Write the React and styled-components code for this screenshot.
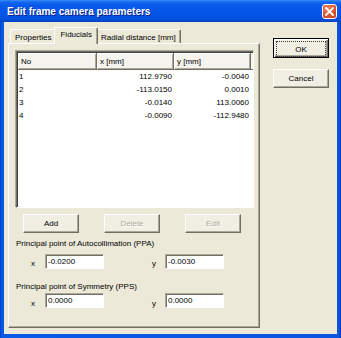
import React from 'react'
import styled, { createGlobalStyle } from 'styled-components'

const GlobalStyle = createGlobalStyle`
  html, body {
    margin: 0;
    padding: 0;
    background: #ffffff;
  }
  body {
    font-family: "Liberation Sans", Arial, sans-serif;
    font-size: 8px;
    color: #000;
  }
  * {
    box-sizing: border-box;
  }
`

const fiducials = [
  { no: '1', x: '112.9790', y: '-0.0040' },
  { no: '2', x: '-113.0150', y: '0.0010' },
  { no: '3', x: '-0.0140', y: '113.0060' },
  { no: '4', x: '-0.0090', y: '-112.9480' },
]

const App = () => {
  return (
    <>
      <GlobalStyle />
      <Window>
        <TitleBar>
          <Title>Edit frame camera parameters</Title>
          <CloseButton>
            <svg width="9" height="9" viewBox="0 0 9 9">
              <path d="M1 1 L8 8 M8 1 L1 8" stroke="#fff" strokeWidth="1.8" strokeLinecap="square" />
            </svg>
          </CloseButton>
        </TitleBar>

        <Client>
          <LeftColumn>
            <TabStrip>
              <Tab>Properties</Tab>
              <Tab active>Fiducials</Tab>
              <Tab>Radial distance [mm]</Tab>
            </TabStrip>

            <Panel>
              <ListView>
                <HeaderRow>
                  <HeaderCell>No</HeaderCell>
                  <HeaderCell>x [mm]</HeaderCell>
                  <HeaderCell>y [mm]</HeaderCell>
                  <HeaderFiller />
                </HeaderRow>
                {fiducials.map((f) => (
                  <Row key={f.no}>
                    <Cell>{f.no}</Cell>
                    <Cell right>{f.x}</Cell>
                    <Cell right>{f.y}</Cell>
                  </Row>
                ))}
              </ListView>

              <ButtonRow>
                <Button>Add</Button>
                <Button disabled>Delete</Button>
                <Button disabled>Edit</Button>
              </ButtonRow>

              <GroupLabel top={6}>Principal point of Autocollimation (PPA)</GroupLabel>
              <FieldRow top={6}>
                <FieldLabel>x</FieldLabel>
                <Field readOnly value="-0.0200" />
                <FieldLabel second>y</FieldLabel>
                <Field readOnly value="-0.0030" />
              </FieldRow>

              <GroupLabel top={13}>Principal point of Symmetry (PPS)</GroupLabel>
              <FieldRow top={2} low>
                <FieldLabel>x</FieldLabel>
                <Field readOnly value="0.0000" />
                <FieldLabel second>y</FieldLabel>
                <Field readOnly value="0.0000" />
              </FieldRow>
            </Panel>
          </LeftColumn>

          <RightColumn>
            <DefaultButton>
              <span>OK</span>
            </DefaultButton>
            <Button>Cancel</Button>
          </RightColumn>
        </Client>
      </Window>
    </>
  )
}

const Window = styled.div`
  width: 341px;
  height: 338px;
  display: flex;
  flex-direction: column;
  background: linear-gradient(to right, #0842c8 0px, #0a5ae8 2px, #0a56e0 339px, #0637b0 341px);
`

const TitleBar = styled.div`
  height: 22px;
  display: flex;
  align-items: center;
  justify-content: space-between;
  padding: 0 4px 0 7px;
  background: linear-gradient(
    to bottom,
    #3c8ef8 0px,
    #1468f0 2px,
    #0a5aeb 5px,
    #0556ec 12px,
    #0552e0 18px,
    #0446ce 21px,
    #0441c4 22px
  );
`

const Title = styled.div`
  color: #ffffff;
  font-weight: bold;
  font-size: 10px;
  text-shadow: 1px 1px #0a1e8a;
`

const CloseButton = styled.div`
  width: 15px;
  height: 15px;
  margin-top: 1px;
  display: flex;
  align-items: center;
  justify-content: center;
  border: 1px solid #ffffff;
  border-radius: 3px;
  background: radial-gradient(circle at 35% 30%, #f08a64 0%, #e05a33 45%, #c23b15 100%);
`

const Client = styled.div`
  flex: 1;
  display: flex;
  margin: 0 4px 4px 4px;
  padding: 5px 0 0 4px;
  background: #ece9d8;
`

const LeftColumn = styled.div`
  width: 252px;
  display: flex;
  flex-direction: column;
  margin-bottom: 6px;
`

const TabStrip = styled.div`
  height: 16px;
  display: flex;
  align-items: flex-end;
  padding-left: 2px;
  position: relative;
  z-index: 1;
`

const Tab = styled.div`
  height: ${({ active }) => (active ? '17px' : '14px')};
  margin: ${({ active }) => (active ? '0 -2px -1px -2px' : '0')};
  padding: ${({ active }) => (active ? '2px 5px 0 5px' : '1px 4px 0 4px')};
  display: flex;
  align-items: ${({ active }) => (active ? 'flex-start' : 'center')};
  white-space: nowrap;
  background: #ece9d8;
  border-top: 1px solid #ffffff;
  border-left: 1px solid #ffffff;
  border-right: 1px solid #716f64;
  border-radius: 2px 2px 0 0;
  box-shadow: inset -1px 0 #aca899;
  position: relative;
  z-index: ${({ active }) => (active ? 2 : 1)};
`

const Panel = styled.div`
  flex: 1;
  display: flex;
  flex-direction: column;
  padding: 6px 0 0 6px;
  border: 1px solid;
  border-color: #ffffff #716f64 #716f64 #ffffff;
  box-shadow: inset -1px -1px #aca899;
`

const ListView = styled.div`
  width: 238px;
  height: 157px;
  background: #ffffff;
  border: 1px solid;
  border-color: #716f64 #ffffff #ffffff #716f64;
  box-shadow: inset 1px 1px #404040, -1px -1px 0 0 #aca899;
  padding: 1px 0 0 1px;
  margin-left: 1px;
  margin-top: 1px;
`

const HeaderRow = styled.div`
  display: grid;
  grid-template-columns: 79px 77px 77px 1fr;
  height: 17px;
`

const HeaderCell = styled.div`
  display: flex;
  align-items: center;
  padding-left: 3px;
  background: #f4f3ee;
  border-right: 1px solid #716f64;
  border-bottom: 1px solid #716f64;
  box-shadow: inset 1px 1px #ffffff, inset -1px -1px #aca899;
`

const HeaderFiller = styled.div`
  background: #f4f3ee;
  border-bottom: 1px solid #716f64;
`

const Row = styled.div`
  display: grid;
  grid-template-columns: 79px 77px 77px;
  height: 13px;
  align-items: center;
  &:first-of-type {
    margin-top: 1px;
  }
`

const Cell = styled.div`
  text-align: ${({ right }) => (right ? 'right' : 'left')};
  padding: ${({ right }) => (right ? '0 2px 0 0' : '0 0 0 1px')};
  white-space: nowrap;
`

const ButtonRow = styled.div`
  display: flex;
  gap: 25px;
  margin-top: 6px;
  padding-left: 8px;
`

const Button = styled.button`
  width: 56px;
  height: 19px;
  padding: 0;
  font-family: "Liberation Sans", Arial, sans-serif;
  font-size: 8px;
  color: #000;
  background: #f1efe4;
  border: 1px solid;
  border-color: #ffffff #716f64 #716f64 #ffffff;
  box-shadow: inset -1px -1px #aca899;
  &:disabled {
    color: #aca899;
    text-shadow: 1px 1px #ffffff;
  }
`

const DefaultButton = styled.button`
  width: 56px;
  height: 20px;
  padding: 1px;
  font-family: "Liberation Sans", Arial, sans-serif;
  font-size: 8px;
  color: #000;
  background: #f1efe4;
  border: 1px solid #000000;
  box-shadow: inset 1px 1px #ffffff, inset -1px -1px #716f64, inset -2px -2px #aca899;

  span {
    display: flex;
    align-items: center;
    justify-content: center;
    height: 100%;
    margin: 1px;
    border: 1px dotted #3c3c3c;
  }
`

const GroupLabel = styled.div`
  margin-top: ${({ top }) => top}px;
  padding-left: 1px;
  line-height: 9px;
  white-space: nowrap;
`

const FieldRow = styled.div`
  display: flex;
  align-items: ${({ low }) => (low ? 'flex-end' : 'center')};
  margin-top: ${({ top }) => top}px;
  padding-left: 15px;
`

const FieldLabel = styled.div`
  width: ${({ second }) => (second ? '14px' : '15px')};
  margin-left: ${({ second }) => (second ? '47px' : '0')};
  padding-top: 3px;
  padding-left: 1px;
`

const Field = styled.input`
  width: 59px;
  height: 15px;
  padding: 0 0 0 2px;
  font-family: "Liberation Sans", Arial, sans-serif;
  font-size: 8px;
  color: #000;
  background: #ffffff;
  border: 1px solid;
  border-color: #aca899 #ffffff #ffffff #aca899;
  box-shadow: inset 1px 1px #716f64;
  outline: none;
`

const RightColumn = styled.div`
  display: flex;
  flex-direction: column;
  gap: 11px;
  margin: 11px 0 0 13px;
`

export default App
